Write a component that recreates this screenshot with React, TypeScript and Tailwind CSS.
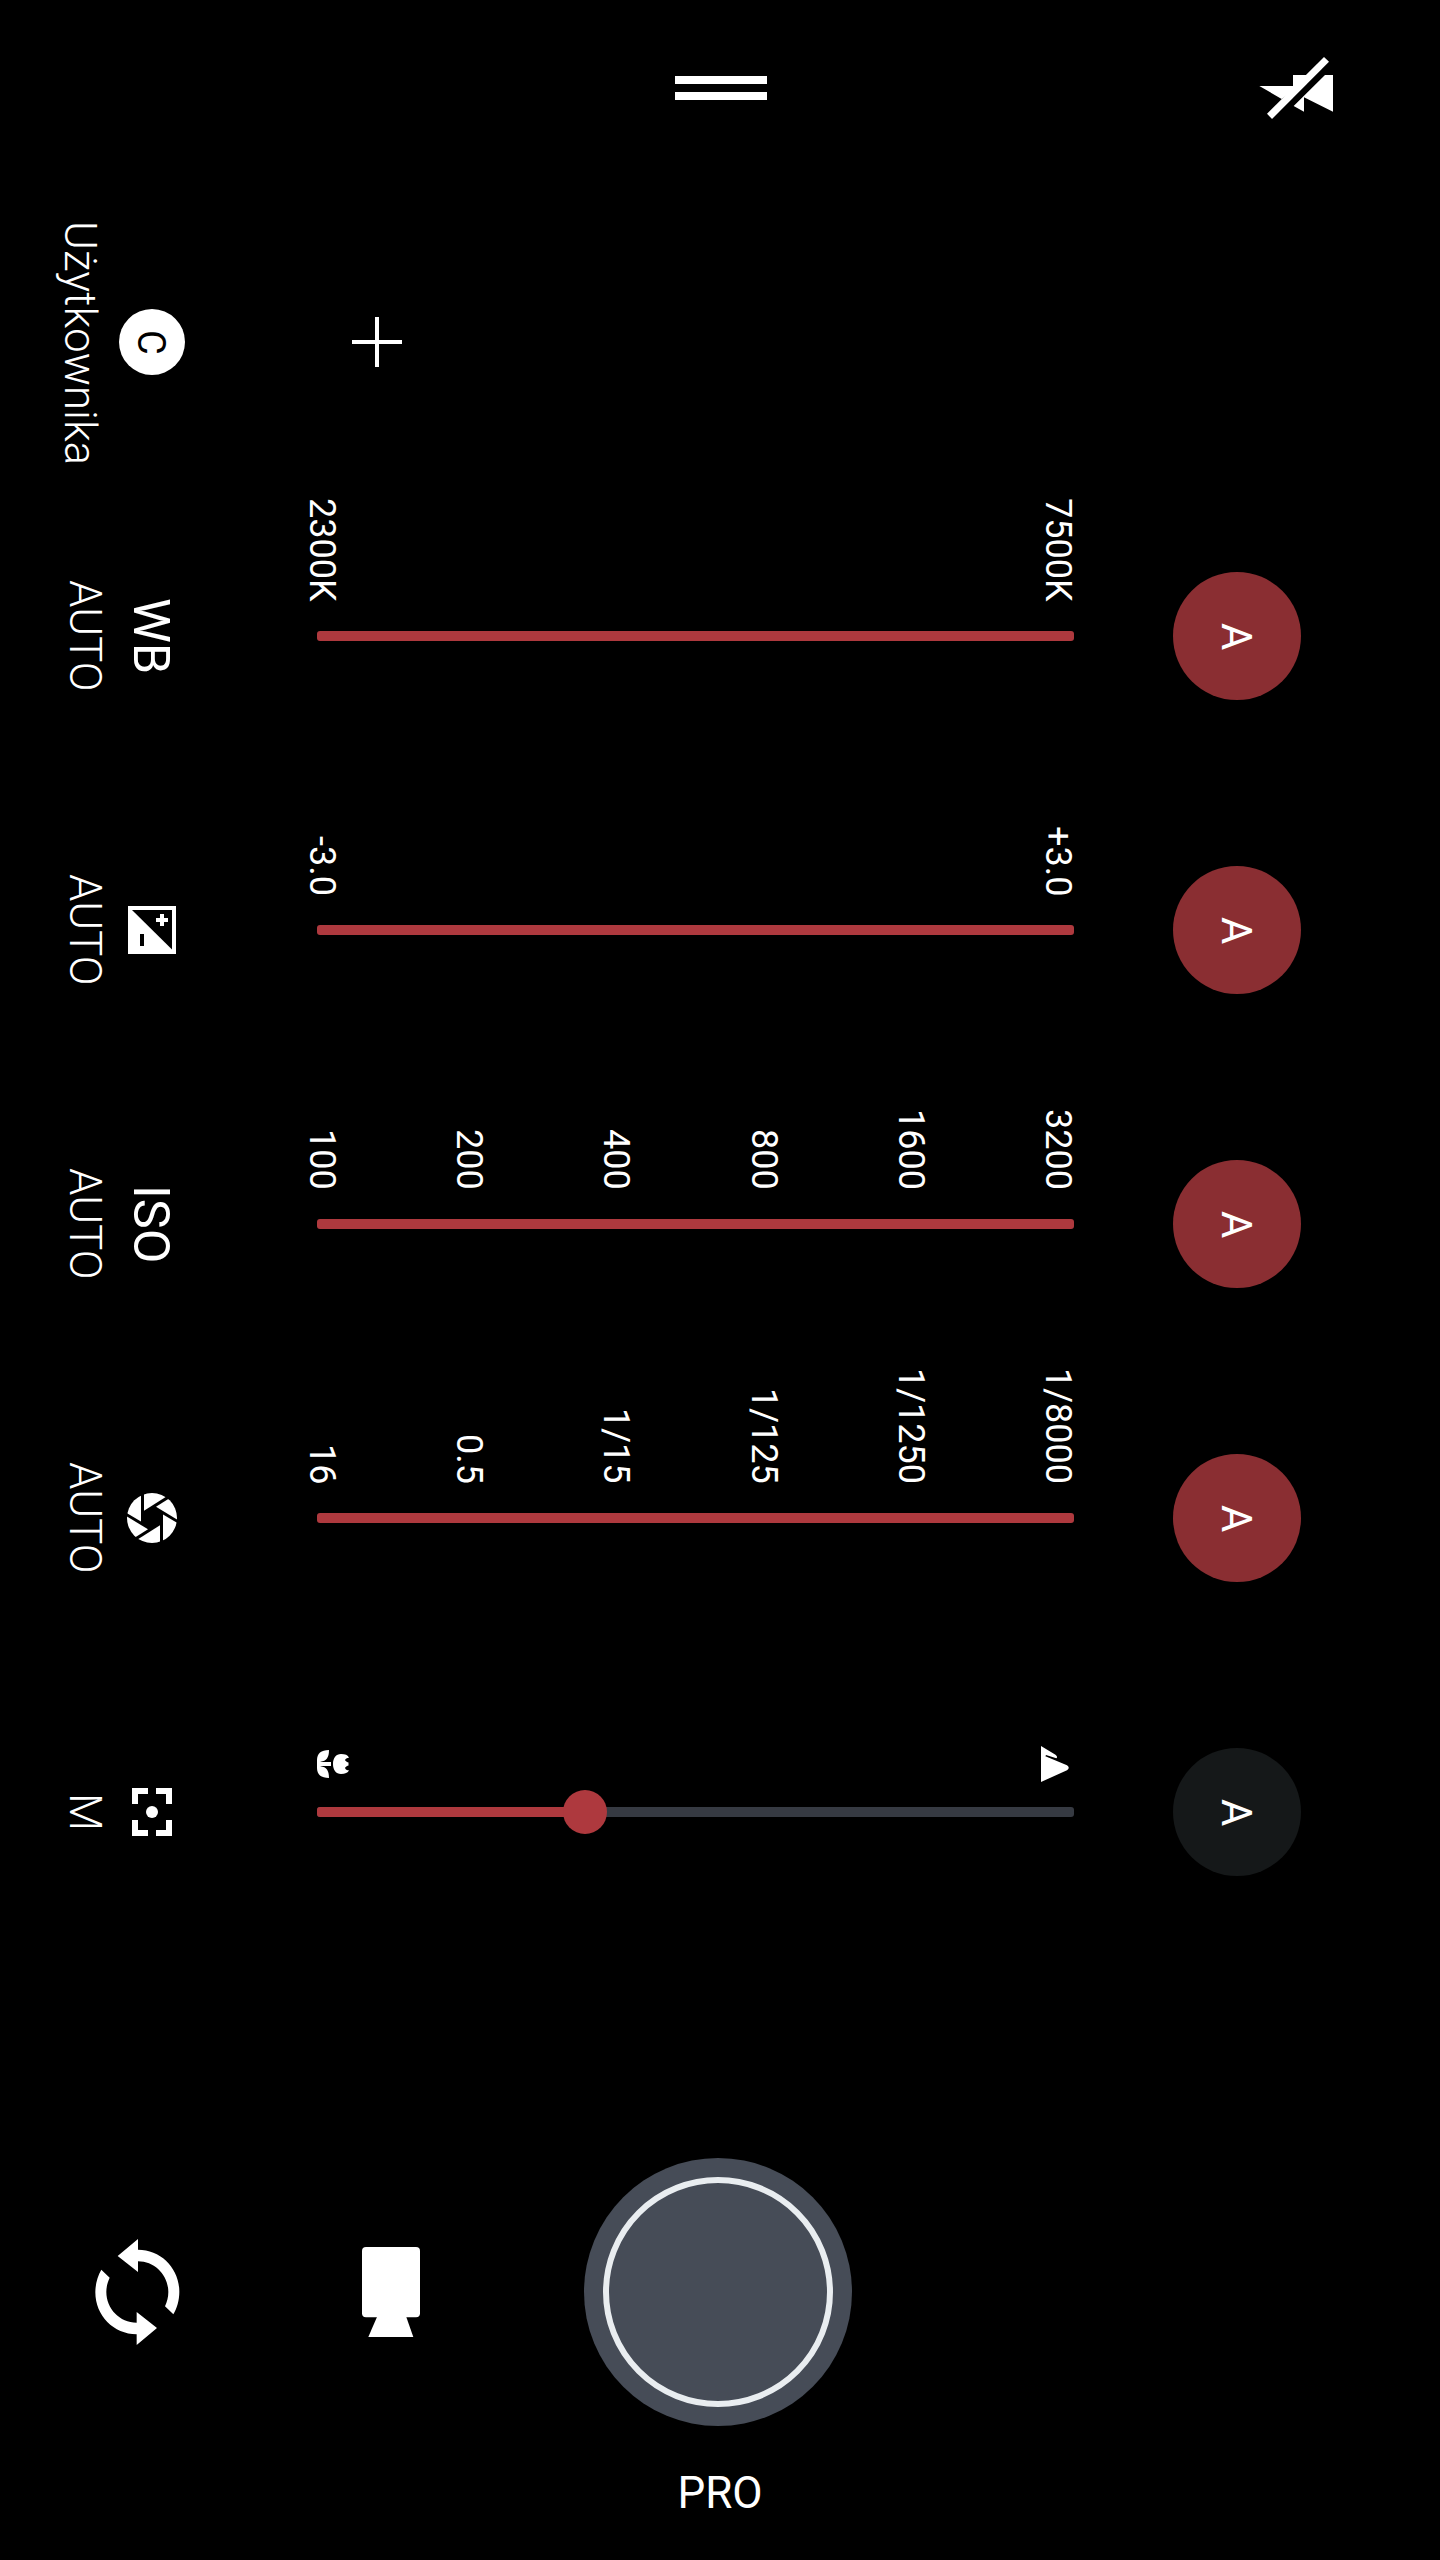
import { useState } from 'react'
import type { ReactNode } from 'react'
import clsx from 'clsx'

type Control = {
  id: string;
  icon: ReactNode;
  marks: string[];
  // manual position of the slider, in px from the start of the track
  position: number;
}

const CONTROLS: Control[] = [
  { id: 'wb', icon: <ModeName>WB</ModeName>, marks: ['2300K', '7500K'], position: 268 },
  { id: 'ev', icon: <ExposureIcon />, marks: ['-3.0', '+3.0'], position: 268 },
  { id: 'iso', icon: <ModeName>ISO</ModeName>, marks: ['100', '200', '400', '800', '1600', '3200'], position: 268 },
  { id: 'shutter', icon: <ApertureIcon />, marks: ['16', '0.5', '1/15', '1/125', '1/1250', '1/8000'], position: 268 },
  { id: 'focus', icon: <FocusIcon />, marks: [], position: 268 },
]

function ModeName({ children }: { children: ReactNode }) {
  return <span className="mr-[2px] text-[50.5px] leading-[60px] [writing-mode:vertical-rl]">{children}</span>
}

function ExposureIcon() {
  return (
    <svg width="48" height="48" viewBox="0 0 48 48">
      <rect width="48" height="48" fill="#fff" />
      <path d="M4 4H44V43.5Z" fill="#000" />
      <path d="M32 8H36V12H40V16H36V20H32V16H28V12H32Z" fill="#fff" />
      <rect x="12" y="28" width="4" height="12" fill="#000" />
    </svg>
  )
}

function ApertureIcon() {
  return (
    <svg width="50" height="50" viewBox="-25 -25 50 50" fill="#fff">
      <defs>
        <clipPath id="lens">
          <circle r="25" />
        </clipPath>
        <g id="blades">
          <path d="M-8 -30V-7.3L20 -24.9V-30Z" />
          <path d="M4 -11.3L32 -28.9L34 7Z" />
          <path d="M11 -3.5V30H30V7.7Z" />
        </g>
      </defs>
      <g clipPath="url(#lens)">
        <use href="#blades" />
        <use href="#blades" transform="rotate(180)" />
      </g>
    </svg>
  )
}

function FocusIcon() {
  return (
    <svg width="40" height="48" viewBox="0 0 40 48" fill="#fff">
      <path d="M0 0H16V6H6V16H0Z" />
      <path d="M24 0H40V16H34V6H24Z" />
      <path d="M0 32H6V42H16V48H0Z" />
      <path d="M34 32H40V48H24V42H34Z" />
      <circle cx="20" cy="24" r="6" />
    </svg>
  )
}

function MacroIcon() {
  return (
    <svg className="ml-4" width="32" height="28" viewBox="0 0 32 28" fill="#fff">
      <path d="M12 0C4 0 0 3.5 0 10V18C0 24.5 4 28 12 28C12 20.5 9.5 17 3.5 16.3V16H14V12H3.5V11.7C9.5 11 12 7.5 12 0Z" />
      <path d="M24 4C19 4 16 8 16 14S19 24 24 24C28 24 31 23 32 20.3C30 20.3 28.3 19.5 28 17.7C29 16.5 30.3 15.8 31.5 15.5V12.5C30.3 12.2 29 11.5 28 10.3C28.3 8.5 30 7.7 32 7.7C31 5 28 4 24 4Z" />
    </svg>
  )
}

function MountainIcon() {
  return (
    <svg className="-mb-1 mr-[10px]" width="28" height="36" viewBox="0 0 28 36" fill="#fff">
      <path d="M0 0L14.5 8.8Q17.2 10.8 15.3 12.3L5 9L4.4 10.3L26 19.2Q29.5 21.7 26 24.2L0 36Z" />
    </svg>
  )
}

function VideoOffIcon() {
  return (
    <svg width="74" height="62" viewBox="117 81 222 186" fill="#fff">
      <path d="M118 168H219V135H262L205 192L185 207Z" />
      <path d="M312 81L327 95L156 267L141 251Z" />
      <path d="M315 135H339V245L252 202V245L221 228Z" />
    </svg>
  )
}

function SwitchCameraIcon() {
  return (
    <svg width="85" height="106" viewBox="105 117 255 318" fill="#fff">
      <path d="M173 168L234 117V149C303 149 358 205 358 275C358 300 351 325 340 343L315 319C321 306 325 292 325 276C325 226 285 184 234 184V216Z" />
      <path
        transform="rotate(180 232 276)"
        d="M173 168L234 117V149C303 149 358 205 358 275C358 300 351 325 340 343L315 319C321 306 325 292 325 276C325 226 285 184 234 184V216Z"
      />
    </svg>
  )
}

function VideoIcon() {
  return (
    <svg width="58" height="90" viewBox="0 0 58 90" fill="#fff">
      <rect width="58" height="70.3" rx="4" />
      <path d="M15 70H44.3L51.3 90H6.3Z" />
    </svg>
  )
}

function ControlRow({ control, auto, onToggle }: { control: Control; auto: boolean; onToggle: () => void }) {
  return (
    <div className="flex h-[294px] items-center">
      <div className="ml-[59px] w-[52px] flex justify-center">
        <span className="text-[44px] font-light leading-[52px] [writing-mode:vertical-rl]">
          {auto ? 'AUTO' : 'M'}
        </span>
      </div>
      <div className="w-[82px] flex justify-center">{control.icon}</div>

      {/* Scale marks and slider */}
      <div className="ml-[108px] h-full w-[778px]">
        <div className="flex h-[113px] items-end justify-between">
          {control.id === 'focus' ? (
            <>
              <MacroIcon />
              <MountainIcon />
            </>
          ) : (
            control.marks.map(mark => (
              <span key={mark} className="w-[42px] text-[36px] leading-[42px] whitespace-nowrap [writing-mode:vertical-rl]">
                {mark}
              </span>
            ))
          )}
        </div>
        <div className={clsx('relative ml-4 mt-[29px] h-[10px] w-[757px] rounded-[3px]', auto ? 'bg-[#ae393e]' : 'bg-[#363a42]')}>
          {!auto && (
            <>
              <div className="h-full rounded-l-[3px] bg-[#ae393e]" style={{ width: control.position }} />
              <div
                className="absolute -top-[17px] size-11 -translate-x-1/2 rounded-full bg-[#ae393e]"
                style={{ left: control.position }}
              />
            </>
          )}
        </div>
      </div>

      <button
        onClick={onToggle}
        className={clsx(
          'ml-[94px] flex size-32 items-center justify-center rounded-full',
          auto ? 'bg-[#8a2e32]' : 'bg-[#151819]'
        )}
      >
        <span className="mr-[2px] mt-[2px] text-[42px] leading-[50px] [writing-mode:vertical-rl]">A</span>
      </button>
    </div>
  )
}

export default function App() {
  const [manual, setManual] = useState<string[]>(['focus']);

  const handleToggle = (id: string) => {
    setManual(prev => (prev.includes(id) ? prev.filter(m => m !== id) : [...prev, id]));
  };

  return (
    <div className="flex h-[2560px] w-[1440px] flex-col overflow-hidden bg-black font-['Roboto',sans-serif] text-white">
      <header className="flex h-[176px] items-center">
        <button className="ml-[675px] flex w-[92px] flex-col gap-2">
          <span className="h-2 w-full bg-white"></span>
          <span className="h-2 w-full bg-white"></span>
        </button>
        <button className="ml-[492px]">
          <VideoOffIcon />
        </button>
      </header>

      <main className="mt-[19px]">
        {/* User presets */}
        <div className="flex h-[294px] items-center">
          <div className="ml-[54px] w-[52px] flex justify-center">
            <span className="mt-[3px] text-[44px] font-light leading-[52px] [writing-mode:vertical-rl]">Użytkownika</span>
          </div>
          <div className="ml-[13px] flex size-[66px] items-center justify-center rounded-full bg-white text-black">
            <span className="mr-[2px] text-[38px] leading-[46px] [writing-mode:vertical-rl]">C</span>
          </div>
          <button className="ml-[167px]">
            <svg width="50" height="50" viewBox="0 0 50 50" fill="#fff">
              <path d="M23 0H27V23H50V27H27V50H23V27H0V23H23Z" />
            </svg>
          </button>
        </div>

        {CONTROLS.map(control => (
          <ControlRow
            key={control.id}
            control={control}
            auto={!manual.includes(control.id)}
            onToggle={() => handleToggle(control.id)}
          />
        ))}
      </main>

      <footer className="mt-[199px]">
        <div className="flex h-[268px] items-center">
          <button className="ml-[95px]">
            <SwitchCameraIcon />
          </button>
          <button className="ml-[182px]">
            <VideoIcon />
          </button>
          <button className="ml-[164px] flex size-[268px] items-center justify-center rounded-full bg-[#464c57]">
            <span className="size-[230px] rounded-full border-[6px] border-[#e9edf0]"></span>
          </button>
        </div>
        <div className="mt-[41px] text-center text-[44px] leading-[52px]">PRO</div>
      </footer>
    </div>
  )
}
